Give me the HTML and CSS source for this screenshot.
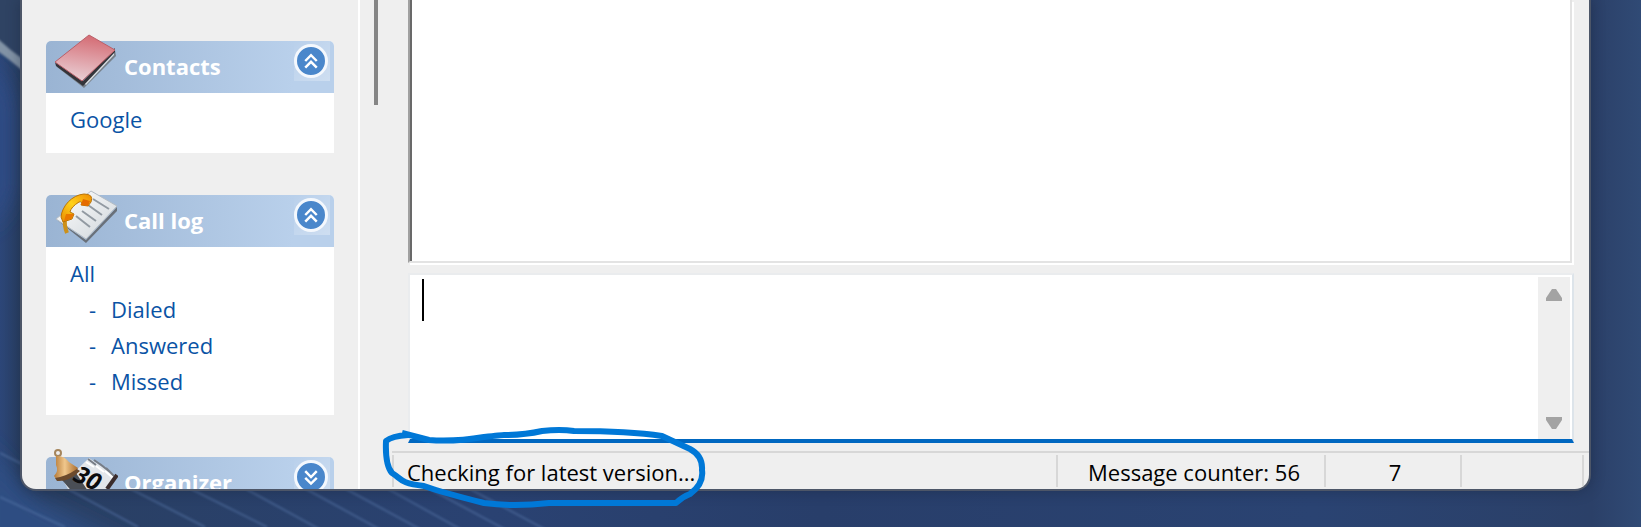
FILE: index.html
```html
<!DOCTYPE html>
<html lang="en">
<head>
<meta charset="utf-8">
<title>Messages</title>
<link rel="stylesheet" href="styles.css">
</head>
<body>
<svg class="wallpaper" viewBox="0 0 1641 527" preserveAspectRatio="none" aria-hidden="true">
  <defs>
    <filter id="soft"><feGaussianBlur stdDeviation="1"/></filter>
    <filter id="haze" x="-50%" y="-50%" width="200%" height="200%"><feGaussianBlur stdDeviation="10"/></filter>
  </defs>
  <path d="M0 0H24V66L0 42Z" fill="#2f4363"/>
  <g filter="url(#haze)">
    <path d="M-20 60Q10 75 14 110V190Q4 220-20 230Z" fill="#2d4c84"/>
    <path d="M-20 440L40 500L160 560H-20Z" fill="#2e4e82"/>
  </g>
  <path d="M-4 37Q10 50 24 60V72Q8 58-4 50Z" fill="#8293a6" filter="url(#soft)"/>
  <g fill="none" stroke="#5878aa" stroke-width="2" opacity=".5" filter="url(#soft)">
    <path d="M0 453L22 464M0 497L65 527M68 489L138 527M131 489L205 527M191 489L267 527M246 489L330 535M306 489L390 535M346 489L440 540M388 489L480 540M430 489L510 532M470 489L550 532"/>
  </g>
</svg>
<div class="window">
  <aside class="sidebar">
    <section class="panel">
      <header class="panel-head">
        <svg class="panel-icon" viewBox="0 0 66 60" aria-hidden="true">
          <defs><linearGradient id="book" x1=".6" y1="0" x2=".4" y2="1"><stop offset="0" stop-color="#d46a72"/><stop offset=".5" stop-color="#df9da4"/><stop offset="1" stop-color="#ead0d6"/></linearGradient></defs>
          <path d="M4 31L31 50L63 17L64 23L32 55L5 34Z" fill="#77808a"/>
          <path d="M31 49L62 18V22L34 52Z" fill="#d7dde2"/>
          <path d="M3 29L31 48L63 15V19L31 53L4 33Z" fill="#34343a"/>
          <path d="M37 2L63 17L30 48L3 29Z" fill="url(#book)" stroke="#bb6069" stroke-width="1"/>
        </svg>
        <h2>Contacts</h2>
        <button class="toggle" type="button" aria-label="Collapse Contacts"><svg viewBox="0 0 34 34"><path d="M10 17L17 10L24 17M10 25L17 18L24 25"/></svg></button>
      </header>
      <ul class="links"><li><a href="#google">Google</a></li></ul>
    </section>
    <section class="panel">
      <header class="panel-head">
        <svg class="panel-icon" viewBox="0 0 66 60" aria-hidden="true">
          <defs><linearGradient id="paper" x1="0" y1="0" x2="1" y2="1"><stop offset="0" stop-color="#ffffff"/><stop offset="1" stop-color="#cfd5da"/></linearGradient><linearGradient id="phone" x1="1" y1="0" x2="0" y2="1"><stop offset="0" stop-color="#f08a00"/><stop offset=".5" stop-color="#ffd21c"/><stop offset="1" stop-color="#e88a00"/></linearGradient></defs>
          <path d="M5 33L34 53L65 20V24L34 56Z" fill="#697079"/>
          <path d="M39 4L65 19L34 52L4 32Z" fill="url(#paper)" stroke="#b4bcc4"/>
          <path d="M41 12L57 22M36 18L50 28M30 24L44 34M24 29L38 40" stroke="#929aa2" stroke-width="2"/>
          <path d="M13 30Q12 39 15 46" fill="none" stroke="#cc9019" stroke-width="4"/>
          <path d="M11 35L9 30C10 19 20 8 32 7Q42 7 39 15L36 19L29 18Q31 14 27 15Q19 20 18 25L22 27L20 32Z" fill="url(#phone)" stroke="#b87409"/>
          <path d="M31 12L38 14L36 19L29 18Z" fill="#e56b00"/><path d="M14 27L22 27L19 32L12 34Z" fill="#e97800"/>
        </svg>
        <h2>Call log</h2>
        <button class="toggle" type="button" aria-label="Collapse Call log"><svg viewBox="0 0 34 34"><path d="M10 17L17 10L24 17M10 25L17 18L24 25"/></svg></button>
      </header>
      <ul class="links">
        <li><a href="#all">All</a></li>
        <li class="sub"><span>-</span><a href="#dialed">Dialed</a></li>
        <li class="sub"><span>-</span><a href="#answered">Answered</a></li>
        <li class="sub"><span>-</span><a href="#missed">Missed</a></li>
      </ul>
    </section>
    <section class="panel">
      <header class="panel-head">
        <svg class="panel-icon" viewBox="0 0 66 60" aria-hidden="true">
          <defs><linearGradient id="bell"><stop offset="0" stop-color="#b57937"/><stop offset=".45" stop-color="#f0c78c"/><stop offset="1" stop-color="#a96b2b"/></linearGradient></defs>
          <path d="M12 33L37 9L64 27L46 54L24 54Z" fill="#e3e6ea"/>
          <path d="M10 31L24 24L40 48L30 54Z" fill="#4a4e55"/>
          <path d="M36 10L44 16M42 11L52 18M48 15L58 23M54 19L62 27" stroke="#777d86" stroke-width="2"/>
          <path d="M34 13L42 18M44 17L52 23M53 22L61 29" stroke="#fff" stroke-width="2"/>
          <path d="M65 26L55 40" stroke="#3a2c2c" stroke-width="4"/>
          <text class="day" transform="translate(20 31) rotate(26)">30</text>
          <circle cx="6" cy="4" r="3" fill="none" stroke="#a5855c" stroke-width="2"/>
          <path d="M4 7Q12 6 17 13L26 19L23 24L5 31L2 27Q7 22 4 16Z" fill="url(#bell)"/>
          <path d="M3 29Q13 28 25 20L28 22Q17 33 5 32Z" fill="#6c4a2c"/>
        </svg>
        <h2>Organizer</h2>
        <button class="toggle" type="button" aria-label="Expand Organizer"><svg viewBox="0 0 34 34"><path d="M10 10L17 17L24 10M10 18L17 25L24 18"/></svg></button>
      </header>
    </section>
  </aside>
  <div class="gutter"><div class="thumb"></div></div>
  <main class="content">
    <div class="history"></div>
    <div class="compose">
      <textarea aria-label="Message" autofocus></textarea>
      <span class="caret"></span>
      <div class="scroll">
        <button type="button" aria-label="Scroll up"><svg viewBox="0 0 16 12"><path d="M0 12V9L6 0H10L16 9V12Z"/></svg></button>
        <button type="button" aria-label="Scroll down"><svg viewBox="0 0 16 12"><path d="M0 0V3L6 12H10L16 3V0Z"/></svg></button>
      </div>
    </div>
    <footer class="status">
      <span class="cell grow">Checking for latest version...</span>
      <span class="cell counter">Message counter: 56</span>
      <span class="cell number">7</span>
      <span class="cell blank"></span>
      <span class="cell grip"></span>
    </footer>
  </main>
</div>
<svg class="marker" viewBox="0 0 330 90" aria-hidden="true"><path d="M18 6L45 13Q70 15 100 10Q118 8 120 8Q140 8 158 4Q176 2 190 4Q245 4 278 9L306 22Q319 29 318 43Q320 57 306 67Q298 70 292 76H165Q130 80 100 76Q60 66 40 59C15 56 18 52 8 46Q1 38 2 14Q8 9 24 8"/></svg>
</body>
</html>
```
FILE: styles.css
```css
* { box-sizing: border-box; }
body {
  margin: 0;
  height: 100vh;
  padding: 0 50px 36px 20px;
  overflow: hidden;
  position: relative;
  background: linear-gradient(90deg, #2c4678 0, #293f62 22px, #2a4272 30%, #283e6a 50%, #2a4372 80%, #2b4068 97%, #304a75 100%);
  font: 22px/36px "Open Sans", "Noto Sans", sans-serif;
  color: #000;
}
.wallpaper { position: absolute; inset: 0; width: 100%; height: 100%; }
.window {
  position: relative;
  height: 100%;
  display: flex;
  overflow: hidden;
  background: #efefef;
  border: 2px solid #4d5668;
  border-top: 0;
  border-radius: 0 0 16px 16px;
  box-shadow: 0 0 14px rgba(20, 30, 50, .4);
}
.sidebar {
  flex: none;
  width: 338px;
  padding: 41px 24px 0;
  border-right: 2px solid #fff;
  display: flex;
  flex-direction: column;
  gap: 42px;
}
.panel { flex: none; background: #fff; border-radius: 5px 5px 0 0; }
.panel-head {
  position: relative;
  height: 52px;
  display: flex;
  align-items: flex-start;
  justify-content: space-between;
  padding: 0 4px 0 78px;
  background: linear-gradient(90deg, #9ab4d3, #b9d0eb 86%);
  border-radius: 5px 5px 0 0;
}
.panel-icon { position: absolute; left: 6px; top: -8px; width: 66px; height: 60px; }
.day { font: italic 700 24px "Open Sans", sans-serif; fill: #0c0c0e; }
.panel-head h2 { margin: 0; font-size: 22px; font-weight: 700; line-height: 50px; color: #fff; }
.toggle {
  width: 36px;
  height: 40px;
  padding: 3px 0 0;
  border: 0;
  display: flex;
  align-items: flex-start;
  background: linear-gradient(135deg, rgba(255, 255, 255, 0), rgba(255, 255, 255, .3));
}
.toggle svg {
  display: block;
  width: 34px;
  height: 34px;
  border: 3px solid #f4f8fd;
  border-radius: 50%;
  background: #4a87cb;
}
.toggle path { fill: none; stroke: #fff; stroke-width: 3; }
.links { list-style: none; margin: 0; padding: 8px 24px 16px; }
.links a { color: #0a53a5; text-decoration: none; }
.sub { display: flex; padding-left: 19px; color: #0a53a5; }
.sub span { width: 22px; }
.gutter { flex: none; width: 32px; padding-left: 14px; }
.thumb { width: 4px; height: 105px; background: #858585; }
.content { flex: 1; min-width: 0; display: flex; flex-direction: column; }
.history {
  flex: 1;
  margin: 0 17px 8px 16px;
  background: #fff;
  border: solid;
  border-width: 0 2px 2px;
  border-color: #e3e3e3 #e3e3e3 #e3e3e3 #a0a0a0;
  box-shadow: inset 2px 0 0 #696969, 2px 2px 0 #fff;
}
.compose {
  position: relative;
  flex: none;
  height: 170px;
  margin: 2px 15px 8px 16px;
  display: flex;
  background: #fff;
  border: 2px solid #eaecee;
  border-right-color: #dde4ea;
  border-bottom: 4px solid #0067c0;
}
.compose textarea { flex: 1; border: 0; outline: 0; resize: none; padding: 2px 12px; font: inherit; background: transparent; caret-color: transparent; }
.caret { position: absolute; left: 12px; top: 4px; width: 2px; height: 42px; background: #000; }
.scroll { width: 32px; margin: 2px 2px 0 0; background: #efefef; display: flex; flex-direction: column; justify-content: space-between; }
.scroll button { height: 34px; padding: 2px 0 0; border: 0; background: none; display: grid; place-items: center; }
.scroll svg { width: 16px; height: 12px; fill: #a3a3a3; }
.status { flex: none; height: 38px; display: flex; border-top: 2px solid #d7d7d7; padding: 2px 0; }
.cell { border-left: 2px solid #d7d7d7; line-height: 34px; text-align: center; white-space: nowrap; }
.grow { flex: 1; text-align: left; padding-left: 13px; }
.counter { width: 268px; padding-left: 6px; }
.number { width: 136px; padding-left: 4px; }
.blank { width: 122px; }
.grip { width: 7px; }
.marker { position: absolute; left: 384px; top: 427px; width: 330px; height: 90px; fill: none; stroke: #0078d7; stroke-width: 6; stroke-linejoin: round; pointer-events: none; overflow: visible; }
```
